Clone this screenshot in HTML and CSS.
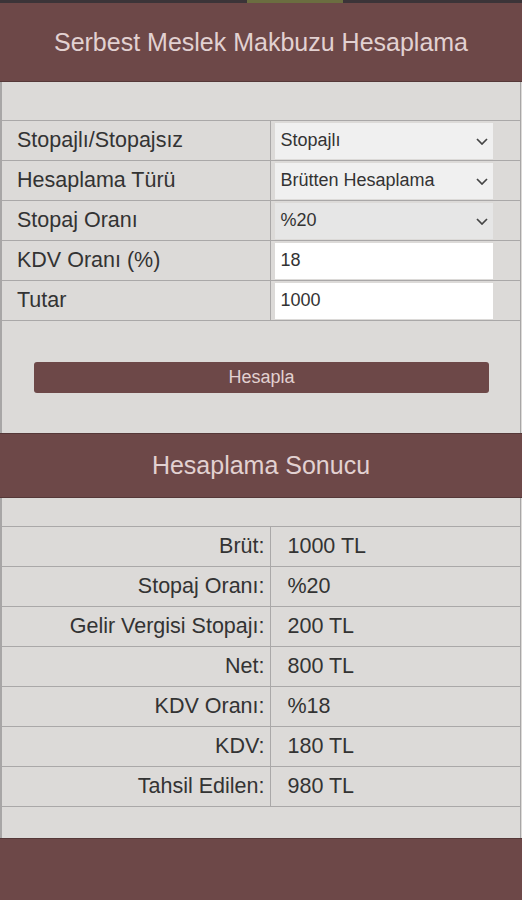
FILE: index.html
```html
<!DOCTYPE html>
<html lang="tr">
<head>
    <meta charset="UTF-8">
    <meta name="viewport" content="width=device-width, initial-scale=1.0">
    <title>Serbest Meslek Makbuzu Hesaplama</title>
    <link rel="stylesheet" href="styles.css">
</head>
<body>
    <div class="top-strip"><div class="top-tab"></div></div>
    <header class="title-bar">
        <h1>Serbest Meslek Makbuzu Hesaplama</h1>
    </header>

    <div class="panel form-panel">
        <table class="form-table">
            <tr>
                <td class="label-cell">Stopajlı/Stopajsız</td>
                <td class="field-cell">
                    <div class="select">
                        <span>Stopajlı</span>
                        <svg class="chevron" width="12" height="7" viewBox="0 0 12 7"><path d="M1 1l5 5 5-5" fill="none" stroke="#444" stroke-width="1.7"/></svg>
                    </div>
                </td>
            </tr>
            <tr>
                <td class="label-cell">Hesaplama Türü</td>
                <td class="field-cell">
                    <div class="select">
                        <span>Brütten Hesaplama</span>
                        <svg class="chevron" width="12" height="7" viewBox="0 0 12 7"><path d="M1 1l5 5 5-5" fill="none" stroke="#444" stroke-width="1.7"/></svg>
                    </div>
                </td>
            </tr>
            <tr>
                <td class="label-cell">Stopaj Oranı</td>
                <td class="field-cell">
                    <div class="select active">
                        <span>%20</span>
                        <svg class="chevron" width="12" height="7" viewBox="0 0 12 7"><path d="M1 1l5 5 5-5" fill="none" stroke="#444" stroke-width="1.7"/></svg>
                    </div>
                </td>
            </tr>
            <tr>
                <td class="label-cell">KDV Oranı (%)</td>
                <td class="field-cell"><input class="text-input" type="text" value="18"></td>
            </tr>
            <tr>
                <td class="label-cell">Tutar</td>
                <td class="field-cell"><input class="text-input" type="text" value="1000"></td>
            </tr>
        </table>
        <div class="button-row">
            <button class="calc-button">Hesapla</button>
        </div>
    </div>

    <header class="title-bar section-bar">
        <h2>Hesaplama Sonucu</h2>
    </header>

    <div class="panel result-panel">
        <table class="result-table">
            <tr><td class="result-label">Brüt:</td><td class="result-value">1000 TL</td></tr>
            <tr><td class="result-label">Stopaj Oranı:</td><td class="result-value">%20</td></tr>
            <tr><td class="result-label">Gelir Vergisi Stopajı:</td><td class="result-value">200 TL</td></tr>
            <tr><td class="result-label">Net:</td><td class="result-value">800 TL</td></tr>
            <tr><td class="result-label">KDV Oranı:</td><td class="result-value">%18</td></tr>
            <tr><td class="result-label">KDV:</td><td class="result-value">180 TL</td></tr>
            <tr><td class="result-label">Tahsil Edilen:</td><td class="result-value">980 TL</td></tr>
        </table>
    </div>

    <footer class="footer-bar"></footer>
</body>
</html>
```

FILE: styles.css
```css
body {
    margin: 0;
    padding: 0;
    background-color: #dcdad8;
    color: #333;
    font-family: "Liberation Sans", Arial, sans-serif;
}
.top-strip {
    height: 3px;
    background-color: #3b3438;
}
.top-tab {
    margin-left: 247px;
    width: 96px;
    height: 3px;
    background-color: #6b6d40;
}
.title-bar {
    height: 78px;
    display: flex;
    align-items: center;
    justify-content: center;
    background-color: #6d4848;
    border-bottom: 1px solid #553838;
}
.title-bar h1,
.title-bar h2 {
    margin: 0;
    font-size: 25px;
    font-weight: normal;
    color: #e2d1d1;
}
.section-bar {
    height: 63px;
    border-top: 1px solid #553838;
}
.panel {
    border-left: 2px solid #a8a6a6;
    border-right: 1px solid #a8a6a6;
    margin-right: 1px;
}
.form-panel {
    padding-top: 38px;
}
.form-table,
.result-table {
    width: 100%;
    border-collapse: collapse;
}
.form-table td,
.result-table td {
    box-sizing: border-box;
    height: 40px;
    padding: 0;
    border-top: 1px solid #aaa8a8;
    border-bottom: 1px solid #aaa8a8;
}
.label-cell {
    width: 268px;
    padding-left: 15px !important;
    font-size: 21.5px;
    color: #333;
}
.field-cell {
    border-left: 1px solid #aaa8a8;
    padding: 0 27px 0 4px !important;
}
.select {
    height: 36px;
    display: flex;
    align-items: center;
    justify-content: space-between;
    padding: 0 5px 0 6px;
    background-color: #f0f0f0;
    font-size: 18px;
    color: #333;
}
.select.active {
    background-color: #e6e6e6;
}
.chevron {
    margin-top: 1px;
}
.text-input {
    display: block;
    width: 100%;
    height: 36px;
    box-sizing: border-box;
    border: none;
    margin: 0;
    padding: 0 6px;
    background-color: #fff;
    font-family: "Liberation Sans", Arial, sans-serif;
    font-size: 18px;
    color: #333;
}
.button-row {
    padding: 41px 31px 40px 32px;
}
.calc-button {
    display: block;
    width: 100%;
    height: 31px;
    border: none;
    border-radius: 3px;
    background-color: #6d4848;
    color: #e2d1d1;
    font-family: "Liberation Sans", Arial, sans-serif;
    font-size: 18px;
}
.result-panel {
    padding-top: 28px;
    padding-bottom: 31px;
}
.result-label {
    width: 268px;
    text-align: right;
    padding-right: 5px !important;
    font-size: 21.5px;
    color: #333;
}
.result-value {
    border-left: 1px solid #aaa8a8;
    padding-left: 17px !important;
    font-size: 21.5px;
    color: #333;
}
.footer-bar {
    height: 62px;
    background-color: #6d4848;
    border-top: 1px solid #553838;
}
```
